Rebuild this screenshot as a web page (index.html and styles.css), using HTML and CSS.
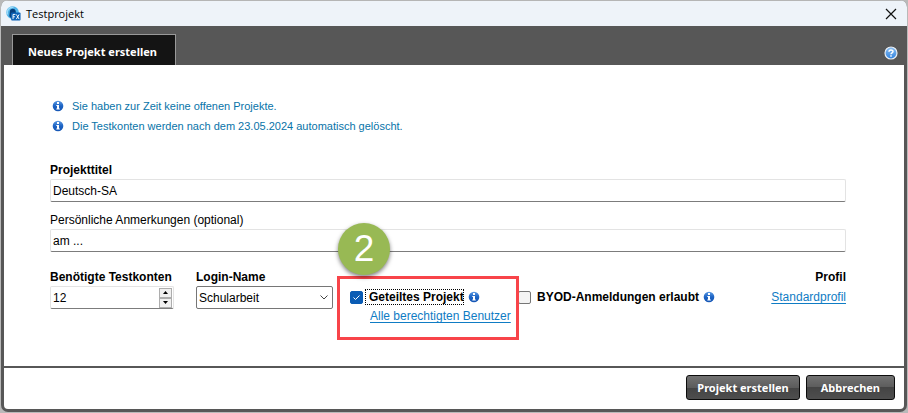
FILE: index.html
```html
<!DOCTYPE html>
<html lang="de">
<head>
<meta charset="utf-8">
<title>Testprojekt</title>
<link rel="stylesheet" href="styles.css">
</head>
<body>
<svg class="defs" aria-hidden="true">
  <defs>
    <linearGradient id="blue" x1="0" y1="0" x2="0" y2="1">
      <stop offset="0" stop-color="#5d9be4"/><stop offset=".5" stop-color="#1c63c4"/><stop offset="1" stop-color="#1656b4"/>
    </linearGradient>
    <linearGradient id="sky" x1="0" y1="0" x2="0" y2="1">
      <stop offset="0" stop-color="#8dc0f2"/><stop offset="1" stop-color="#2f82e0"/>
    </linearGradient>
    <symbol id="info" viewBox="0 0 12 12">
      <circle cx="6" cy="6" r="5.3" fill="url(#blue)"/>
      <path d="M5 2h2v2H5zM4.300 5H7v3.500h.8v1H4.300v-1H5V6h-.7z" fill="#fff"/>
    </symbol>
  </defs>
</svg>
<main class="dialog">
  <header class="titlebar">
    <svg class="app-icon" viewBox="0 0 16 16" aria-hidden="true">
      <circle cx="7" cy="7" r="6.700" fill="#4fb2e8"/>
      <path d="M1.700 9A5.500 5.500 0 0 1 8 1.600" fill="none" stroke="#9ddaf7" stroke-width="1.600"/>
      <path d="M4 6.500C4 4.200 5.500 3 7.300 3s3 1.200 3.200 3.500V8H6v5.500L3.500 11z" fill="#073f7c"/>
      <rect x="5.500" y="7" width="10" height="8.500" rx="1" fill="#0b61b5"/>
      <path d="M7.500 14V9H10M7.500 11.500H9.500M11 9l3 5M14 9l-3 5" fill="none" stroke="#fff" stroke-width="1"/>
    </svg>
    <h1 class="title">Testprojekt</h1>
    <button class="close" type="button" aria-label="Schließen">
      <svg viewBox="0 0 12 12"><path d="M1 1l10 10M11 1L1 11" stroke="#111" stroke-width="1.200"/></svg>
    </button>
  </header>
  <div class="tabbar">
    <button class="tab" type="button">Neues Projekt erstellen</button>
    <button class="help" type="button" aria-label="Hilfe">
      <svg viewBox="0 0 14 14"><circle cx="7" cy="7" r="6" fill="url(#sky)" stroke="#e8eef5" stroke-width="1.200"/><path d="M5 5.700C5 3.300 9 3.400 9 5.500 9 6.800 7 6.800 7 8.300M7 9.300v1.500" fill="none" stroke="#fff" stroke-width="1.500"/></svg>
    </button>
  </div>
  <form class="form">
    <section class="content">
      <ul class="notes">
        <li><svg class="info"><use href="#info"/></svg>Sie haben zur Zeit keine offenen Projekte.</li>
        <li><svg class="info"><use href="#info"/></svg>Die Testkonten werden nach dem 23.05.2024 automatisch gelöscht.</li>
      </ul>
      <div class="field">
        <label class="strong" for="titel">Projekttitel</label>
        <input class="text" id="titel" type="text" value="Deutsch-SA">
      </div>
      <div class="field">
        <label for="notiz">Persönliche Anmerkungen (optional)</label>
        <input class="text" id="notiz" type="text" value="am ...">
      </div>
      <div class="options">
        <div class="field accounts">
          <label class="strong" for="konten">Benötigte Testkonten</label>
          <div class="spinner">
            <input id="konten" type="text" inputmode="numeric" value="12">
            <div class="steps">
              <button type="button" aria-label="Mehr"><svg viewBox="0 0 5 3"><path d="M0 3l2.500-3L5 3z"/></svg></button>
              <button type="button" aria-label="Weniger"><svg viewBox="0 0 5 3"><path d="M0 0l2.500 3L5 0z"/></svg></button>
            </div>
          </div>
        </div>
        <div class="field login">
          <label class="strong" for="login">Login-Name</label>
          <select id="login"><option>Schularbeit</option></select>
        </div>
        <div class="shared">
          <div class="check">
            <input id="geteilt" type="checkbox" checked>
            <label class="strong focus" for="geteilt">Geteiltes Projekt</label>
            <svg class="info"><use href="#info"/></svg>
          </div>
          <a class="users" href="#">Alle berechtigten Benutzer</a>
          <div class="marker"></div>
          <div class="step">2</div>
        </div>
        <div class="check byod">
          <input id="byod" type="checkbox">
          <label class="strong" for="byod">BYOD-Anmeldungen erlaubt</label>
          <svg class="info"><use href="#info"/></svg>
        </div>
        <div class="profile">
          <span class="strong">Profil</span>
          <a href="#">Standardprofil</a>
        </div>
      </div>
    </section>
    <footer class="actions">
      <button type="submit">Projekt erstellen</button>
      <button type="button">Abbrechen</button>
    </footer>
  </form>
</main>
</body>
</html>
```
FILE: styles.css
```css
* { box-sizing: border-box; }

body {
  margin: 0;
  padding: 0 1px 1px;
  min-height: 100vh;
  display: flex;
  background: #b9b9b9;
  color: #000;
  font: 12px/16px "Liberation Sans", Arial, sans-serif;
}

button, input, select { font: inherit; color: inherit; margin: 0; }
button { padding: 0; border: 0; background: none; }
svg { display: block; flex: none; }
a { color: #0f7cc4; text-underline-offset: 2px; }
.defs { position: absolute; width: 0; height: 0; }
.strong { font-weight: bold; }

.dialog {
  flex: 1;
  display: flex;
  flex-direction: column;
  background: #575757;
  border-radius: 7px;
  overflow: hidden;
}

.titlebar {
  display: flex;
  align-items: center;
  height: 26px;
  padding: 0 10px 0 5px;
  background: #eef3f9;
  border-top: 1px solid #b5b5b5;
}
.app-icon { width: 15px; height: 15px; }
.title {
  margin: 0 auto 0 5px;
  font: 11px/16px "Open Sans", "Noto Sans", sans-serif;
}
.close svg { width: 12px; height: 12px; }

.tabbar {
  display: flex;
  justify-content: space-between;
  align-items: flex-end;
  height: 39px;
  padding: 0 9px 0 11px;
}
.tab {
  height: 31px;
  padding: 4px 18px 0 15px;
  border: 1px solid #999;
  border-bottom: 0;
  background: #141414;
  color: #fff;
  font: bold 11px/16px "Noto Sans", sans-serif;
}
.help { padding-bottom: 5px; }
.help svg { width: 14px; height: 14px; }

.form {
  flex: 1;
  display: flex;
  flex-direction: column;
  margin: 0 3px 3px;
  background: #fff;
  border-radius: 0 0 4px 4px;
}
.content { flex: 1; padding: 31px 58px 0 46px; }

.notes {
  margin: 0 0 26px;
  padding: 0 0 0 2px;
  list-style: none;
  font-size: 11px;
  line-height: 20px;
  color: #0873a8;
}
.notes li { display: flex; align-items: center; gap: 8px; }
.info { width: 12px; height: 12px; }

.field { display: flex; flex-direction: column; gap: 1px; margin-bottom: 10px; }
.text, .spinner {
  height: 23px;
  border: 1px solid #e3e3e3;
  border-bottom-color: #7c7c7c;
  border-radius: 2px;
  background: #fff;
}
.text { width: 100%; padding: 0 2px; }

.options { display: flex; align-items: flex-start; padding-top: 7px; }
.accounts { width: 124px; margin-right: 22px; }
.spinner { display: flex; align-items: center; padding-right: 1px; }
.spinner input {
  flex: 1;
  min-width: 0;
  height: 20px;
  padding: 0 2px;
  border: 0;
  background: transparent;
}
.steps { display: flex; flex-direction: column; }
.steps button {
  display: grid;
  place-items: center;
  width: 13px;
  height: 10px;
  border: 1px solid #adadad;
  background: #f0f0f0;
}
.steps svg { width: 5px; height: 3px; }

.login { width: 137px; margin-right: 17px; }
.login select {
  height: 23px;
  padding: 0 2px;
  appearance: none;
  border: 1px solid #767676;
  border-radius: 2px;
  background: #fff url("data:image/svg+xml,%3Csvg xmlns='http://www.w3.org/2000/svg' width='8' height='5'%3E%3Cpath d='M.5.5L4 4 7.500.5' fill='none' stroke='%23444'/%3E%3C/svg%3E") no-repeat right 4px center;
}

.check { display: flex; align-items: center; padding-top: 20px; }
.check input {
  width: 13px;
  height: 13px;
  appearance: none;
  border: 1px solid #767676;
  border-radius: 2px;
  background: #f4f4f4;
}
.check input:checked {
  border-color: #0a5cb4;
  background: #0a5cb4 url("data:image/svg+xml,%3Csvg xmlns='http://www.w3.org/2000/svg' width='9' height='7'%3E%3Cpath d='M1.500 3.500l2 2 4-4' fill='none' stroke='%23fff'/%3E%3C/svg%3E") no-repeat center;
}
.check label { margin: 0 4px 0 6px; }
.check .focus { margin: 0 4px 0 2px; padding: 0 0 0 4px; outline: 1px dotted #000; outline-offset: -1px; }

.shared { position: relative; width: 168px; }
.users { display: block; margin: 3px 0 0 20px; white-space: nowrap; }
.marker {
  position: absolute;
  z-index: 1;
  top: 7px;
  left: -13px;
  width: 182px;
  height: 64px;
  border: 3px solid #f84449;
  pointer-events: none;
}
.step {
  position: absolute;
  z-index: 2;
  top: -46px;
  left: -12px;
  width: 52px;
  height: 52px;
  border-radius: 50%;
  background: #98b954;
  box-shadow: 0 2px 4px rgba(0, 0, 0, .5);
  color: #fff;
  font-size: 37px;
  line-height: 52px;
  text-align: center;
}

.profile {
  display: flex;
  flex-direction: column;
  align-items: flex-end;
  gap: 4px;
  margin-left: auto;
}

.actions {
  display: flex;
  justify-content: flex-end;
  gap: 6px;
  padding: 7px 9px 9px;
  border-top: 2px solid #575757;
}
.actions button {
  height: 25px;
  padding: 0 10px;
  border: 1px solid #0c0c0c;
  border-radius: 3px;
  background: linear-gradient(#727272, #5c5c5c 50%, #444 50%, #4e4e4e);
  color: #fff;
  font: bold 11px/16px "Noto Sans", sans-serif;
}
.actions button:last-child { padding: 0 14px; }
```
